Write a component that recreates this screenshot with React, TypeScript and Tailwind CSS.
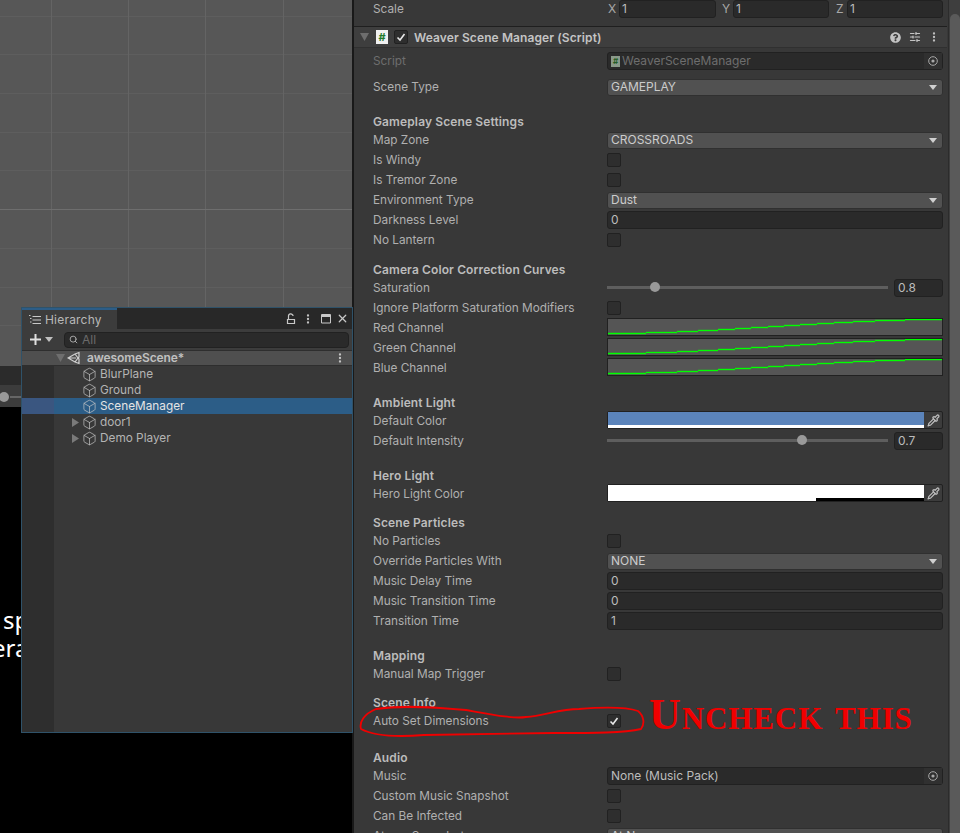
import { Box, EllipsisVertical, Pipette, Search, SlidersHorizontal, X } from "lucide-react";
import { FaQuestionCircle } from "react-icons/fa";
import type { ReactNode } from "react";

const font = "font-['Inter','Liberation_Sans',sans-serif]";

function Caret({ className = "" }: { className?: string }) {
  return (
    <svg width="8" height="5" viewBox="0 0 8 5" className={className}>
      <path d="M0 0h8L4 5z" fill="currentColor" />
    </svg>
  );
}

function Fold({ className = "" }: { className?: string }) {
  return (
    <svg width="9" height="8" viewBox="0 0 9 8" className={className}>
      <path d="M0 0h9L4.5 8z" fill="#6e6e6e" />
    </svg>
  );
}

function Row({ label, children, dim }: { label: string; children?: ReactNode; dim?: boolean }) {
  return (
    <div className="flex h-5 items-center pl-[19px] pr-[4px]">
      <div className={`w-[234px] shrink-0 whitespace-nowrap pt-[2px] text-[11.8px] ${dim ? "text-[#6e6e6e]" : "text-[#b0b0b0]"}`}>{label}</div>
      <div className="flex min-w-0 flex-1 items-center">{children}</div>
    </div>
  );
}

function Head({ title, className }: { title: string; className: string }) {
  return <div className={`h-[18px] pl-[19px] font-semibold leading-[20px] tracking-[0.12px] text-[#bcbcbc] ${className}`}>{title}</div>;
}

function Check({ on }: { on?: boolean }) {
  return (
    <div className="flex h-[14px] w-[14px] items-center justify-center rounded-[2px] border border-[#212121] bg-[#2e2e2e]">
      {on && (
        <svg width="10" height="10" viewBox="0 0 10 10">
          <path d="M1.5 5.5 4 8l4.5-6" fill="none" stroke="#e8e8e8" strokeWidth="1.6" />
        </svg>
      )}
    </div>
  );
}

function Field({ value, className = "flex-1" }: { value: string; className?: string }) {
  return (
    <div className={`h-[18px] rounded-[3px] border border-[#212121] bg-[#2a2a2a] pl-[3px] leading-[16px] text-[#bcbcbc] ${className}`}>
      {value}
    </div>
  );
}

function Drop({ value }: { value: string }) {
  return (
    <div className="flex h-[17px] flex-1 items-center justify-between rounded-[3px] border border-[#303030] bg-[#515151] pl-[3px] pr-[5px] text-[#cccccc]">
      <span>{value}</span>
      <Caret className="text-[#d0d0d0]" />
    </div>
  );
}

function Target() {
  return (
    <svg width="10" height="10" viewBox="0 0 10 10" className="text-[#a8a8a8]">
      <circle cx="5" cy="5" r="4.3" fill="none" stroke="currentColor" />
      <circle cx="5" cy="5" r="1.6" fill="currentColor" />
    </svg>
  );
}

function ObjectField({ value, icon, dim }: { value: string; icon?: boolean; dim?: boolean }) {
  return (
    <div className={`flex h-[18px] flex-1 items-center rounded-[3px] border border-[#212121] bg-[#2a2a2a] pl-[3px] ${dim ? "text-[#6e6e6e]" : "text-[#bcbcbc]"}`}>
      {icon && (
        <span className="mr-[2px] flex h-[11px] w-[9px] items-center justify-center bg-[#8a9a8a] text-[8px] font-bold leading-none text-[#245c24]">#</span>
      )}
      <span className="flex-1">{value}</span>
      <span className="flex h-full w-[18px] items-center justify-center bg-[#303030]">
        <Target />
      </span>
    </div>
  );
}

function Slide({ pct, value }: { pct: string; value: string }) {
  return (
    <div className="flex flex-1 items-center">
      <div className="relative -top-px h-[3px] w-[281px] bg-[#5e5e5e]">
        <div className={`absolute top-[-4px] h-[10px] w-[10px] rounded-full bg-[#999999] ${pct}`} />
      </div>
      <Field value={value} className="ml-[6px] w-[49px] shrink-0" />
    </div>
  );
}

const steps = [
  [0, 14.5], [38, 13.5], [69, 12.5], [90, 11.5], [110, 10.5], [127, 9.5], [143, 8.5], [160, 7.5],
  [176, 6.5], [192, 5.5], [209, 4.5], [226, 3.5], [245, 2.5], [267, 1.5], [297, 0.5],
];

function Curve() {
  return (
    <div className="relative -top-px h-[18px] flex-1 border border-[#212121] bg-[#555555]">
      <svg width="334" height="16" viewBox="0 0 334 16" className="block">
        {steps.map(([x, y], i) => (
          <path key={x} d={`M${x} ${y}H${steps[i + 1]?.[0] ?? 336}`} fill="none" stroke="#00ff00" strokeWidth="1.4" />
        ))}
      </svg>
    </div>
  );
}

function ColorField({ main, bar, barWidth }: { main: string; bar: string; barWidth: string }) {
  return (
    <div className="relative -top-px flex h-[18px] flex-1 rounded-[2px] border border-[#212121] bg-[#3c3c3c]">
      <div className={`flex flex-1 flex-col justify-end ${main}`}>
        <div className="flex h-[3px] justify-end">
          <div className={`${barWidth} ${bar}`} />
        </div>
      </div>
      <div className="flex w-[18px] items-center justify-center text-[#c0c0c0]">
        <Pipette size={13} strokeWidth={2.2} />
      </div>
    </div>
  );
}

function Axis({ name, className }: { name: string; className: string }) {
  return (
    <div className={`flex items-center ${className}`}>
      <span className="w-[12px] shrink-0 pl-px text-[#a8a8a8]">{name}</span>
      <Field value="1" className="flex-1 !pl-[2px]" />
    </div>
  );
}

function Inspector() {
  return (
    <div className="relative flex h-[833px] w-[606px] overflow-hidden bg-[#383838] text-[12px]">
      <div className="w-[593px] shrink-0">
        <div className="-mt-[1px] h-5">
          <Row label="Scale">
            <Axis name="X" className="w-[109px]" />
            <Axis name="Y" className="ml-[5px] w-[108px]" />
            <Axis name="Z" className="ml-[6px] w-[108px]" />
          </Row>
        </div>
        <div className="mt-[7px] flex h-[22px] items-center border-y border-t-[#1f1f1f] border-b-[#303030] bg-[#3e3e3e] pr-[7px]">
          <Fold className="ml-[6px]" />
          <div className="ml-[7px] flex h-[14px] w-[12px] items-center justify-center bg-[#f0f0f0] text-[11px] font-bold leading-none text-[#1f7a2e]">#</div>
          <div className="ml-[6px]">
            <Check on />
          </div>
          <div className="ml-[6px] flex-1 pt-[1px] font-semibold tracking-[0.1px] text-[#c4c4c4]">Weaver Scene Manager (Script)</div>
          <FaQuestionCircle size={11} className="text-[#c4c4c4]" />
          <SlidersHorizontal size={12} strokeWidth={2.4} className="ml-[8px] text-[#c4c4c4]" />
          <EllipsisVertical size={12} strokeWidth={2.6} className="ml-[7px] text-[#c4c4c4]" />
        </div>
        <div className="mt-[3px]">
          <Row label="Script" dim>
            <ObjectField value="WeaverSceneManager" icon dim />
          </Row>
        </div>
        <div className="mt-[6px]">
          <Row label="Scene Type">
            <Drop value="GAMEPLAY" />
          </Row>
        </div>
        <Head title="Gameplay Scene Settings" className="mt-[15px]" />
        <Row label="Map Zone"><Drop value="CROSSROADS" /></Row>
        <Row label="Is Windy"><Check /></Row>
        <Row label="Is Tremor Zone"><Check /></Row>
        <Row label="Environment Type"><Drop value="Dust" /></Row>
        <Row label="Darkness Level"><Field value="0" /></Row>
        <Row label="No Lantern"><Check /></Row>
        <Head title="Camera Color Correction Curves" className="mt-[10px]" />
        <Row label="Saturation"><Slide pct="left-[43px]" value="0.8" /></Row>
        <Row label="Ignore Platform Saturation Modifiers"><Check /></Row>
        <Row label="Red Channel"><Curve /></Row>
        <Row label="Green Channel"><Curve /></Row>
        <Row label="Blue Channel"><Curve /></Row>
        <Head title="Ambient Light" className="mt-[15px]" />
        <Row label="Default Color"><ColorField main="bg-[#5b84bb]" bar="bg-white" barWidth="w-full" /></Row>
        <Row label="Default Intensity"><Slide pct="left-[190px]" value="0.7" /></Row>
        <Head title="Hero Light" className="mt-[15px]" />
        <Row label="Hero Light Color"><ColorField main="bg-white" bar="bg-black" barWidth="w-[108px]" /></Row>
        <Head title="Scene Particles" className="mt-[9px]" />
        <Row label="No Particles"><Check /></Row>
        <Row label="Override Particles With"><Drop value="NONE" /></Row>
        <Row label="Music Delay Time"><Field value="0" /></Row>
        <Row label="Music Transition Time"><Field value="0" /></Row>
        <Row label="Transition Time"><Field value="1" /></Row>
        <Head title="Mapping" className="mt-[15px]" />
        <Row label="Manual Map Trigger"><Check /></Row>
        <Head title="Scene Info" className="mt-[9px]" />
        <Row label="Auto Set Dimensions"><Check on /></Row>
        <Head title="Audio" className="mt-[17px]" />
        <Row label="Music"><ObjectField value="None (Music Pack)" /></Row>
        <Row label="Custom Music Snapshot"><Check /></Row>
        <Row label="Can Be Infected"><Check /></Row>
        <Row label="Atmos Snapshot"><Drop value="At None" /></Row>
      </div>
      {/* scrollbar */}
      <div className="ml-[1px] w-[12px] border-l border-[#2c2c2c] bg-[#3e3e3e] pt-[14px]">
        <div className="ml-[1px] h-full w-[10px] rounded-t-[5px] bg-[#5a5a5a]" />
      </div>
      {/* red annotation drawn on top of the screenshot */}
      <svg width="606" height="833" viewBox="0 0 606 833" className="pointer-events-none absolute left-0 top-0">
        <path
          d="M7 729C5 722 10 714 22 709C50 705 80 707 112 710C140 715 160 719 172 717C190 716 205 709 225 709C250 707 272 707 284 711C290 716 291 724 287 729C270 733 240 733 200 733C150 734 110 734 70 735C45 737 20 736 7 729Z"
          fill="none"
          stroke="#f00000"
          strokeWidth="1.8"
        />
      </svg>
      <div className="absolute left-[295px] top-[690px] whitespace-nowrap font-['Liberation_Serif',serif] text-[44px] font-bold leading-[50px] tracking-[0.9px] text-[#f00000] [font-variant:small-caps]">
        Uncheck this
      </div>
    </div>
  );
}

function UnityLogo() {
  return (
    <svg width="14" height="14" viewBox="0 0 14 14" fill="none" stroke="#d0d0d0" strokeWidth="1.2">
      <path d="M1 7 8 3l4-1.5V6l-1 1 1 1v4.5L8 11 1 7zM1 7h8M8 3l3 4-3 4" />
    </svg>
  );
}

function TreeRow({ name, arrow, selected }: { name: string; arrow?: boolean; selected?: boolean }) {
  return (
    <div className={`flex h-4 items-center text-[11.8px] ${selected ? "bg-[#2c5d87] text-[#e4e4e4]" : "text-[#b4b4b4]"}`}>
      <div className={`h-full w-[32px] shrink-0 ${selected ? "bg-[#3a5680]" : "bg-[#2e2e2e]"}`} />
      <div className="flex w-[25px] justify-end">
        {arrow && (
          <svg width="7" height="9" viewBox="0 0 7 9" className="text-[#7a7a7a]">
            <path d="M0 0l7 4.5L0 9z" fill="currentColor" />
          </svg>
        )}
      </div>
      <Box size={15} strokeWidth={1.1} className="ml-[3px] shrink-0 text-[#c8c8c8]" />
      <span className="ml-[3px] pt-[2px]">{name}</span>
    </div>
  );
}

function HierarchyWindow() {
  return (
    <div className="absolute left-[21px] top-[307px] flex h-[426px] w-[332px] flex-col border border-[#2f5269] bg-[#383838] text-[12px]">
      <div className="flex h-[21px] shrink-0 items-stretch bg-[#282828]">
        <div className="flex w-[95px] items-center border-t-2 border-[#2c5d87] bg-[#3c3c3c] pl-[7px] pt-[1px] tracking-[0.2px] text-[#b8b8b8]">
          <svg width="12" height="10" viewBox="0 0 12 10" stroke="#c8c8c8" fill="none" className="mr-[4px]">
            <path d="M3.5 1.5H12M3.5 5H12M3.5 8.5H12M0 .5h1.5M1 3.5h1.5M1 7h1.5" />
          </svg>
          Hierarchy
        </div>
        <div className="flex flex-1 items-center justify-end pr-[3px] text-[#c8c8c8]">
          <svg width="10" height="12" viewBox="0 0 10 12" fill="none" stroke="currentColor" strokeWidth="1.2">
            <path d="M1.5 6.5h7v4h-7zM2.5 6V3.5a2.3 2.3 0 0 1 4.6-.5" />
          </svg>
          <EllipsisVertical size={12} strokeWidth={2.6} className="ml-[6px]" />
          <svg width="11" height="10" viewBox="0 0 11 10" fill="none" stroke="currentColor" className="ml-[7px]">
            <path d="M.5 .5h9v8.5h-9z" />
            <path d="M.5 2h9" strokeWidth="2" />
          </svg>
          <X size={13} strokeWidth={2.2} className="ml-[4px]" />
        </div>
      </div>
      <div className="flex h-[21px] shrink-0 items-center bg-[#3c3c3c] pl-[7px]">
        <svg width="13" height="13" viewBox="0 0 13 13" fill="none" stroke="#e0e0e0" strokeWidth="2">
          <path d="M6.5 1v11M1 6.5h11" />
        </svg>
        <Caret className="ml-[3px] text-[#c0c0c0]" />
        <div className="ml-[11px] mr-[3px] flex h-4 flex-1 items-center rounded-[4px] border border-[#212121] bg-[#2a2a2a] pl-[4px] text-[#6a6a6a]">
          <Search size={9} strokeWidth={2.4} className="text-[#b0b0b0]" />
          <span className="ml-[4px]">All</span>
        </div>
      </div>
      <div className="flex h-4 shrink-0 items-center border-y border-[#2e2e2e] bg-[#4f4f4f]">
        <Fold className="ml-[34px]" />
        <span className="ml-[2px]">
          <UnityLogo />
        </span>
        <span className="ml-[6px] flex-1 font-semibold tracking-[-0.1px] text-[#c0c0c0]">awesomeScene*</span>
        <EllipsisVertical size={12} strokeWidth={2.6} className="mr-[6px] text-[#c8c8c8]" />
      </div>
      <TreeRow name="BlurPlane" />
      <TreeRow name="Ground" />
      <TreeRow name="SceneManager" selected />
      <TreeRow name="door1" arrow />
      <TreeRow name="Demo Player" arrow />
      <div className="flex flex-1">
        <div className="w-[32px] bg-[#2e2e2e]" />
      </div>
    </div>
  );
}

function SceneGrid() {
  const xs = [51.5, 128.5, 205.5, 283.5];
  const ys = [16.5, 54.5, 93.5, 132.5, 170.5, 248.5, 287.5, 325.5];
  return (
    <svg width="352" height="366" viewBox="0 0 352 366" className="block">
      {ys.map((y) => (
        <path key={y} d={`M0 ${y}H352`} stroke="#5e5e5e" />
      ))}
      {xs.map((x) => (
        <path key={x} d={`M${x} 0V366`} stroke="#646464" />
      ))}
      <path d="M0 209.5H352" stroke="#6e6e6e" />
    </svg>
  );
}

export default function App() {
  return (
    <div className={`relative flex h-[833px] w-[960px] overflow-hidden bg-black ${font}`}>
      <div className="flex w-[352px] shrink-0 flex-col">
        <div className="h-[366px] shrink-0 bg-[#575757]">
          <SceneGrid />
        </div>
        <div className="h-[19px] shrink-0 bg-[#2b2b2b]" />
        <div className="flex h-[22px] shrink-0 items-center bg-[#3c3c3c] pt-[2px]">
          <div className="h-[10px] w-[10px] -translate-x-[1px] rounded-full bg-[#999999]" />
          <div className="h-[2px] w-[20px] bg-[#666666]" />
        </div>
        <div className="flex-1 bg-black pt-[199px] font-['Noto_Sans',sans-serif] text-[24px] leading-[28px] text-white">
          <div className="pl-[3px]">sp</div>
          <div className="-ml-[8px]">era</div>
        </div>
      </div>
      <div className="w-[2px] shrink-0 bg-[#191919]" />
      <Inspector />
      <HierarchyWindow />
    </div>
  );
}
